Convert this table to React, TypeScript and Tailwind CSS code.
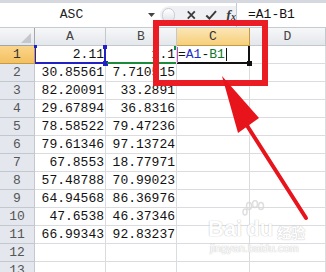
import { Fragment } from 'react';

type Row = { a: string; b: string };

const ROWS: Row[] = [
  { a: '2.11', b: '1.1' },
  { a: '30.85561', b: '7.710515' },
  { a: '82.20091', b: '33.2891' },
  { a: '29.67894', b: '36.8316' },
  { a: '78.58522', b: '79.47236' },
  { a: '79.61346', b: '97.13724' },
  { a: '67.8553', b: '18.77971' },
  { a: '57.48788', b: '70.99023' },
  { a: '64.94568', b: '86.36976' },
  { a: '47.6538', b: '46.37346' },
  { a: '66.99343', b: '92.83237' },
  { a: '', b: '' },
  { a: '', b: '' },
];

const COLS = ['A', 'B', 'C', 'D'];

const mono = "font-['Liberation_Mono','DejaVu_Sans_Mono',monospace]";

function FormulaBar() {
  return (
    <div className="flex h-[25px] items-stretch border-b border-[#c6cbd2] bg-white">
      <div className={`flex w-[143px] items-center justify-center text-[13px] text-[#222] ${mono}`}>
        ASC
      </div>
      <div className="flex w-[17px] items-center justify-center">
        <svg width="7" height="4" viewBox="0 0 7 4">
          <path d="M0 0h7L3.5 4z" fill="#444" />
        </svg>
      </div>
      <div className="my-[3px] flex w-[76px] items-center gap-[5px] rounded-l-full bg-[#eef0f3] pl-[2px]">
        <div className="h-[15px] w-[15px] rounded-full border border-[#c9cdd3] bg-gradient-to-b from-white to-[#dde1e6]" />
        <svg width="12" height="12" viewBox="0 0 12 12" className="ml-[6px]">
          <path d="M2 2l8 8M10 2l-8 8" stroke="#3a3a3a" strokeWidth="2" />
        </svg>
        <svg width="14" height="12" viewBox="0 0 14 12" className="ml-[3px]">
          <path d="M1.5 6.5l3.5 3.5 7.5-8.5" stroke="#3a3a3a" strokeWidth="2.2" fill="none" />
        </svg>
        <span className="ml-[4px] font-['Liberation_Serif',serif] text-[14px] italic font-bold text-[#3a3a3a]">
          f<span className="text-[10px]">x</span>
        </span>
      </div>
      <div className="w-px bg-[#c6cbd2]" />
      <div className={`flex flex-1 items-center pl-[11px] text-[13px] text-[#111] ${mono}`}>=A1-B1</div>
    </div>
  );
}

function Grid() {
  return (
    <div className="grid grid-cols-[35px_71px_71px_73px_76px_1fr] grid-rows-[18px] auto-rows-[18px]">
      <div className="relative border-b border-r border-[#9fa6ae] bg-gradient-to-b from-[#f6f7f9] to-[#e4e7eb]">
        <svg width="10" height="10" viewBox="0 0 10 10" className="absolute bottom-[2px] right-[3px]">
          <path d="M10 0v10H0z" fill="#c4c8ce" />
        </svg>
      </div>
      {COLS.map((c) => (
        <div
          key={c}
          className={`flex items-center justify-center border-b border-r text-[13px] ${mono} ${
            c === 'C'
              ? 'border-[#c29b45] bg-gradient-to-b from-[#fbe6b5] to-[#f6cf79] text-[#333]'
              : 'border-[#c3c8ce] bg-gradient-to-b from-[#f6f7f9] to-[#e4e7eb] text-[#444]'
          }`}
        >
          {c}
        </div>
      ))}
      <div className="border-b border-[#c3c8ce] bg-gradient-to-b from-[#f6f7f9] to-[#e4e7eb]" />

      {ROWS.map((r, i) => (
        <Fragment key={i}>
          <div
            className={`flex items-center justify-center border-b border-r text-[13px] ${mono} ${
              i === 0
                ? 'border-[#c29b45] bg-gradient-to-b from-[#fbd58a] to-[#f4c060] text-[#333]'
                : 'border-[#c3c8ce] bg-[#e4e8ee] text-[#555]'
            }`}
          >
            {i + 1}
          </div>
          <div className={`flex items-center justify-end overflow-hidden whitespace-nowrap border-b border-r border-[#dadcdf] pr-[1px] text-[13px] text-[#111] ${mono}`}>
            {r.a}
          </div>
          <div className={`flex items-center justify-end overflow-visible whitespace-nowrap border-b border-r border-[#dadcdf] pr-[1px] text-[13px] text-[#111] ${mono}`}>
            {r.b}
          </div>
          <div className={`flex items-center whitespace-nowrap border-b border-r border-[#dadcdf] bg-white pl-[1px] text-[13px] ${mono}`}>
            {i === 0 && (
              <>
                <span className="text-[#111]">=</span>
                <span className="text-[#1f2fc8]">A1</span>
                <span className="text-[#111]">-</span>
                <span className="text-[#0d7a2c]">B1</span>
                <span className="ml-[1px] inline-block h-[13px] w-px bg-[#111]" />
              </>
            )}
          </div>
          <div className="border-b border-r border-[#dadcdf]" />
          <div className="border-b border-[#dadcdf]" />
        </Fragment>
      ))}
    </div>
  );
}

function Overlays() {
  return (
    <>
      {/* A1 range (blue) */}
      <div className="absolute left-[35px] top-[46px] h-[18px] w-[71px] border-b-2 border-l border-r-2 border-[#2121c4]" />
      <div className="absolute left-[34px] top-[45px] h-[3px] w-[3px] bg-[#2121c4]" />
      <div className="absolute left-[103px] top-[45px] h-[4px] w-[4px] bg-[#2121c4]" />
      <div className="absolute left-[103px] top-[61px] h-[5px] w-[5px] bg-[#2121c4]" />
      {/* B1 range (green) */}
      <div className="absolute left-[107px] top-[62px] h-[2px] w-[69px] bg-[#1b8a3a]" />
      <div className="absolute left-[174px] top-[46px] h-[4px] w-[2px] bg-[#1b8a3a]" />
      {/* C1 active cell */}
      <div className="absolute left-[177px] top-[46px] h-[18px] w-[73px] border-b-2 border-r-2 border-[#111]" />
      <div className="absolute left-[177px] top-[47px] h-[16px] w-px bg-[#c050c0]" />
      <div className="absolute left-[247px] top-[61px] h-[5px] w-[5px] bg-[#111]" />
      {/* red highlight box */}
      <div className="absolute left-[153px] top-[20px] h-[66px] w-[115px] border-[6px] border-[#ea1c24]" />
      {/* arrow */}
      <svg className="absolute left-0 top-0" width="326" height="272" viewBox="0 0 326 272">
        <line x1="306" y1="218" x2="246" y2="124" stroke="#e8141c" strokeWidth="4" strokeLinecap="round" />
        <polygon points="222,76 259,118 238,133" fill="#e8141c" />
      </svg>
      {/* watermark */}
      <div className="pointer-events-none absolute left-[208px] top-[200px] flex flex-col items-start opacity-80">
        <svg width="26" height="22" viewBox="0 0 26 22" className="ml-[34px]">
          <g fill="none" stroke="#d8d8d8" strokeWidth="1.5">
            <ellipse cx="7" cy="6" rx="2.5" ry="3.5" />
            <ellipse cx="13" cy="4" rx="2.5" ry="3.5" />
            <ellipse cx="19" cy="6" rx="2.5" ry="3.5" />
            <ellipse cx="3" cy="12" rx="2" ry="3" />
          </g>
        </svg>
        <div className="-mt-[4px] flex items-end gap-[4px]">
          <span className="font-['Liberation_Sans',Arial,sans-serif] text-[22px] font-bold leading-none text-white [text-shadow:0_0_1px_#bbb,0_0_1px_#bbb]">
            Bai
          </span>
          <span className="font-['Liberation_Sans',Arial,sans-serif] text-[22px] font-bold leading-none text-white [text-shadow:0_0_1px_#bbb,0_0_1px_#bbb]">
            du
          </span>
          <span className="mb-[1px] font-['Noto_Sans_CJK_SC',sans-serif] text-[14px] font-bold leading-none text-white [text-shadow:0_0_1px_#bbb,0_0_1px_#bbb]">
            经验
          </span>
        </div>
        <span className="mt-[3px] pl-[2px] font-['Liberation_Sans',Arial,sans-serif] text-[11px] leading-none text-white [text-shadow:0_0_1px_#bbb,0_0_1px_#bbb]">
          jingyan.baidu.com
        </span>
      </div>
    </>
  );
}

export default function App() {
  return (
    <div className="relative h-[272px] w-[326px] overflow-hidden bg-white">
      <div className="h-[3px] bg-[#d5d9df]" />
      <FormulaBar />
      <Grid />
      <Overlays />
    </div>
  );
}
